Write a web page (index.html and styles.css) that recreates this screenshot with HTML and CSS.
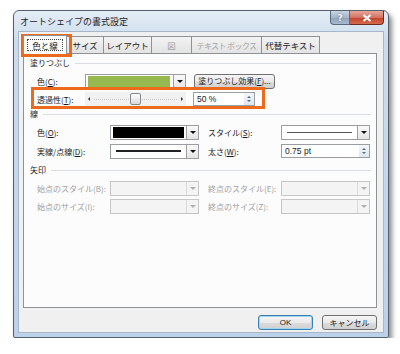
FILE: index.html
```html
<!DOCTYPE html>
<html lang="ja">
<head>
    <meta charset="UTF-8">
    <title>オートシェイプの書式設定</title>
    <link rel="stylesheet" href="styles.css">
</head>
<body>
    <div class="window">
        <div class="titlebar">
            <span class="title">オートシェイプの書式設定</span>
            <div class="caption-btns">
                <span class="cap help">?</span>
                <span class="cap close">
                    <svg width="10" height="8" viewBox="0 0 10 8"><path d="M1.5 1 L8.5 7 M8.5 1 L1.5 7" stroke="#fff" stroke-width="2" fill="none"/></svg>
                </span>
            </div>
        </div>

        <div class="client">
            <div class="tabs">
                <div class="tab active w-color"><span class="focus">色と線</span></div>
                <div class="tab w-size">サイズ</div>
                <div class="tab w-layout">レイアウト</div>
                <div class="tab w-pic disabled">図</div>
                <div class="tab w-text disabled">テキスト ボックス</div>
                <div class="tab w-alt">代替テキスト</div>
            </div>

            <div class="panel">
                <div class="section">塗りつぶし</div>
                <div class="row r-fill">
                    <span class="label lw-short">色(<u>C</u>):</span>
                    <div class="combo cw-fill">
                        <div class="combo-value"><span class="swatch green"></span></div>
                        <span class="drop"><i class="arrow"></i></span>
                    </div>
                    <button class="btn btn-effects">塗りつぶし効果(<u>F</u>)...</button>
                </div>
                <div class="row r-trans">
                    <span class="label lw-short">透過性(<u>T</u>):</span>
                    <div class="slider">
                        <span class="tri tri-left"></span>
                        <span class="track"></span>
                        <span class="thumb"></span>
                        <span class="tri tri-right"></span>
                    </div>
                    <div class="spin sw-trans">
                        <span class="spin-value">50 %</span>
                        <span class="spin-btns"><i class="up"></i><i class="down"></i></span>
                    </div>
                </div>

                <div class="section">線</div>
                <div class="row r-line1">
                    <span class="label lw-long">色(<u>O</u>):</span>
                    <div class="combo cw-line">
                        <div class="combo-value"><span class="swatch black"></span></div>
                        <span class="drop"><i class="arrow"></i></span>
                    </div>
                    <span class="label lw-long col2">スタイル(<u>S</u>):</span>
                    <div class="combo cw-line">
                        <div class="combo-value"><span class="stroke thin"></span></div>
                        <span class="drop"><i class="arrow"></i></span>
                    </div>
                </div>
                <div class="row r-line2">
                    <span class="label lw-long">実線/点線(<u>D</u>):</span>
                    <div class="combo cw-line">
                        <div class="combo-value"><span class="stroke thick"></span></div>
                        <span class="drop"><i class="arrow"></i></span>
                    </div>
                    <span class="label lw-long col2">太さ(<u>W</u>):</span>
                    <div class="spin cw-line">
                        <span class="spin-value">0.75 pt</span>
                        <span class="spin-btns"><i class="up"></i><i class="down"></i></span>
                    </div>
                </div>

                <div class="section">矢印</div>
                <div class="row r-arrow1 off">
                    <span class="label lw-long">始点のスタイル(B):</span>
                    <div class="combo cw-line">
                        <div class="combo-value"></div>
                        <span class="drop"><i class="arrow"></i></span>
                    </div>
                    <span class="label lw-long col2">終点のスタイル(E):</span>
                    <div class="combo cw-line">
                        <div class="combo-value"></div>
                        <span class="drop"><i class="arrow"></i></span>
                    </div>
                </div>
                <div class="row r-arrow2 off">
                    <span class="label lw-long">始点のサイズ(I):</span>
                    <div class="combo cw-line">
                        <div class="combo-value"></div>
                        <span class="drop"><i class="arrow"></i></span>
                    </div>
                    <span class="label lw-long col2">終点のサイズ(Z):</span>
                    <div class="combo cw-line">
                        <div class="combo-value"></div>
                        <span class="drop"><i class="arrow"></i></span>
                    </div>
                </div>
            </div>

            <div class="buttons">
                <button class="btn dlg default">OK</button>
                <button class="btn dlg">キャンセル</button>
            </div>

            <div class="mark mark-tab"></div>
            <div class="mark mark-trans"></div>
        </div>
    </div>
</body>
</html>
```

FILE: styles.css
```css
* {
    margin: 0;
    padding: 0;
    box-sizing: border-box;
}

body {
    background: #fff;
    font-family: "Noto Sans CJK JP", "Noto Sans", sans-serif;
    font-size: 8px;
    color: #1a1a1a;
}

u {
    text-decoration: underline;
}

/* window frame */

.window {
    margin: 10px 0 0 13px;
    width: 376px;
    height: 328px;
    border: 1px solid #55606c;
    border-radius: 6px 6px 2px 2px;
    padding: 0 4px 4px 4px;
    background: linear-gradient(#e4edf6, #cddcec 30px, #c3d6ea 60%, #bcd2ea);
    box-shadow: 3px 4px 5px rgba(0, 0, 0, 0.45);
}

.titlebar {
    height: 20px;
    display: flex;
    justify-content: space-between;
    align-items: flex-start;
}

.title {
    font-size: 9px;
    line-height: 21px;
    padding-left: 2px;
    color: #1e1e1e;
}

.caption-btns {
    display: flex;
}

.cap {
    height: 14px;
    display: flex;
    align-items: center;
    justify-content: center;
    border: 1px solid #5b6a7c;
    border-top: none;
}

.help {
    width: 20px;
    border-radius: 0 0 0 4px;
    background: linear-gradient(#c9d6e4, #a4b5c9 50%, #8ea3bb 51%, #a7bad0);
    color: #fff;
    font-family: "DejaVu Sans", sans-serif;
    font-weight: bold;
    font-size: 9px;
    text-shadow: 0 0 2px #42536a;
}

.close {
    width: 34px;
    border-color: #6e2a22;
    border-left: none;
    border-radius: 0 0 4px 0;
    background: linear-gradient(#e6a79a, #d27262 50%, #c0412c 51%, #d66a4c);
}

.client {
    position: relative;
    width: 366px;
    height: 302px;
    background: #f0f0f0;
    border: 1px solid #a7b7c9;
    padding: 3px 6px 0 4px;
}

/* tabs */

.tabs {
    display: flex;
    align-items: flex-end;
    height: 18px;
    padding-top: 1px;
}

.tab {
    height: 17px;
    border: 1px solid #8d9296;
    border-bottom: none;
    border-left: none;
    background: linear-gradient(#f3f3f3, #e3e3e3);
    display: flex;
    align-items: center;
    justify-content: center;
    font-size: 8.5px;
    white-space: nowrap;
    overflow: hidden;
    color: #1a1a1a;
}

.tab.disabled {
    color: #a3a3a3;
}

.tab.active {
    border-left: 1px solid #8d9296;
    background: #fcfcfc;
    position: relative;
    z-index: 1;
    margin-bottom: -1px;
    height: 19px;
}

.focus {
    border: 1px dotted #4a4a4a;
    padding: 0 4px;
    line-height: 10px;
}

.w-color { width: 44px; }
.w-size { width: 37px; }
.w-layout { width: 48px; }
.w-pic { width: 40px; }
.w-text { width: 70px; letter-spacing: -0.6px; font-size: 8px; }
.w-alt { width: 58px; }

/* panel */

.panel {
    height: 255px;
    background: #fcfcfc;
    border: 1px solid #8d9296;
    padding: 3px 5px 0 6px;
}

.section {
    display: flex;
    align-items: center;
    height: 12px;
    line-height: 12px;
}

.section::after {
    content: "";
    flex: 1;
    margin-left: 5px;
    border-top: 1px solid #d8dee4;
}

.row {
    display: flex;
    align-items: center;
    padding-left: 7px;
    height: 16px;
}

.r-fill { margin-top: 4px; }
.r-trans { margin-top: 2px; margin-bottom: 1px; }
.r-line1 { margin-top: 4px; }
.r-line2 { margin-top: 3px; margin-bottom: 5px; }
.r-arrow1 { margin-top: 4px; }
.r-arrow2 { margin-top: 2px; }

.label {
    white-space: nowrap;
}

.lw-short { width: 48px; }
.lw-long { width: 73px; }
.col2 { margin-left: 9px; }

.off .label {
    color: #a0a0a0;
}

/* combo boxes */

.combo {
    display: flex;
    height: 15px;
    border: 1px solid #9a9ea3;
    background: #fff;
}

.cw-fill { width: 101px; }
.cw-line { width: 89px; }

.combo-value {
    flex: 1;
    display: flex;
    align-items: center;
    padding: 0 2px;
}

.drop {
    width: 12px;
    border-left: 1px solid #9a9ea3;
    background: linear-gradient(#fafafa, #e4e4e4);
    display: flex;
    align-items: center;
    justify-content: center;
}

.arrow {
    width: 0;
    height: 0;
    border-left: 3px solid transparent;
    border-right: 3px solid transparent;
    border-top: 3px solid #111;
}

.off .combo {
    background: #f4f4f4;
    border-color: #c6c6c6;
}

.off .drop {
    border-left-color: #dadada;
    background: #f4f4f4;
}

.off .arrow {
    border-top-color: #b0b0b0;
}

.swatch {
    flex: 1;
    height: 11px;
}

.swatch.green {
    background: #95b84f;
    margin-right: 1px;
}

.swatch.black {
    background: #000;
}

.stroke {
    flex: 1;
    margin: 0 3px;
    background: #222;
}

.stroke.thin { height: 1px; background: #555; }
.stroke.thick { height: 2px; }

/* slider and spin boxes */

.slider {
    width: 101px;
    height: 14px;
    display: flex;
    align-items: center;
    position: relative;
    background: #f1f1f1;
    padding: 0 3px;
}

.track {
    flex: 1;
    margin: 0 4px;
    border-top: 1px dotted #c8c8c8;
}

.tri {
    width: 0;
    height: 0;
    border-top: 2px solid transparent;
    border-bottom: 2px solid transparent;
}

.tri-left { border-right: 2px solid #333; }
.tri-right { border-left: 2px solid #333; }

.thumb {
    position: absolute;
    left: 45px;
    top: 1px;
    width: 11px;
    height: 12px;
    border: 1px solid #86898c;
    border-radius: 2px;
    background: linear-gradient(#fdfdfd, #dadada);
}

.spin {
    display: flex;
    height: 14px;
    border: 1px solid #9a9ea3;
    background: #fff;
}

.sw-trans {
    width: 62px;
    margin-left: 7px;
}

.spin-value {
    flex: 1;
    padding-left: 3px;
    line-height: 12px;
    font-family: "Liberation Sans", Arial, sans-serif;
    font-size: 8.5px;
}

.spin-btns {
    width: 10px;
    display: flex;
    flex-direction: column;
    justify-content: center;
    align-items: center;
    gap: 2px;
    background: linear-gradient(#f3f6f9, #dde5ee);
}

.spin-btns .up,
.spin-btns .down {
    width: 0;
    height: 0;
    border-left: 2px solid transparent;
    border-right: 2px solid transparent;
}

.spin-btns .up { border-bottom: 2px solid #4a6c94; }
.spin-btns .down { border-top: 2px solid #4a6c94; }

/* buttons */

.btn {
    font-family: inherit;
    font-size: 8px;
    color: #1a1a1a;
    border: 1px solid #707070;
    border-radius: 3px;
    background: linear-gradient(#f6f6f6, #e9e9e9 50%, #dcdcdc 51%, #d0d0d0);
    white-space: nowrap;
}

.btn-effects {
    width: 81px;
    height: 15px;
    margin-left: 8px;
    line-height: 12px;
}

.buttons {
    display: flex;
    justify-content: flex-end;
    gap: 9px;
    margin-top: 7px;
}

.dlg {
    width: 55px;
    height: 15px;
    line-height: 12px;
}

.dlg.default {
    border-color: #3c7fb1;
    box-shadow: inset 0 0 0 1px #9fd6f5;
    font-family: "Liberation Sans", Arial, sans-serif;
}

/* orange highlight marks over the dialog */

.mark {
    position: absolute;
    border: 3px solid #ec6a1c;
}

.mark-tab {
    left: 2px;
    top: 2px;
    width: 51px;
    height: 23px;
}

.mark-trans {
    left: 12px;
    top: 55px;
    width: 234px;
    height: 22px;
}
```
